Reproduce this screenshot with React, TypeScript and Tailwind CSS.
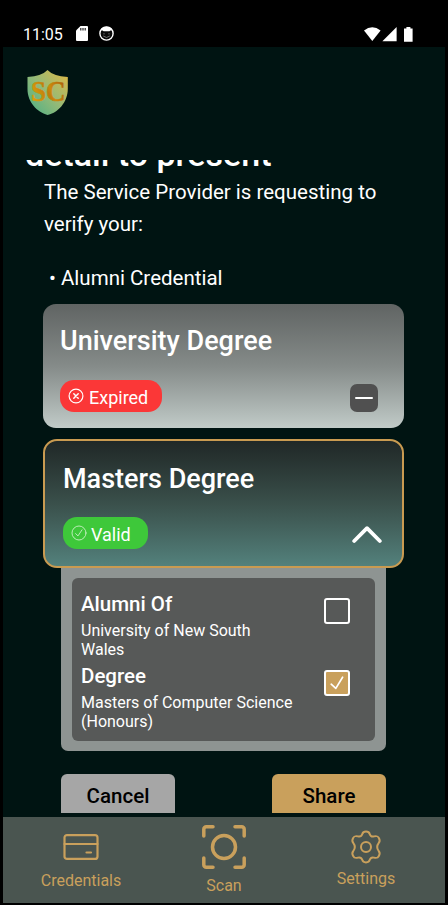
import type { ReactNode } from 'react';

function StatusBar() {
  return (
    <div className="flex h-[47px] items-end justify-between bg-black pr-[34px] pb-[5px] pl-[23px] text-white">
      <div className="flex items-center">
        <span className="w-[53px] pt-[2px] text-[16px] leading-[15px]">11:05</span>
        <svg className="h-[15px] w-[12px]" viewBox="0 0 12 15">
          <path d="M4.5 0H11a1 1 0 0 1 1 1v13a1 1 0 0 1-1 1H1a1 1 0 0 1-1-1V4.5Z" fill="#fff" />
          <path d="M4.8 2v2.4M7 2v2.4M9.2 2v2.4" stroke="#222" strokeWidth="1.2" />
        </svg>
        <svg className="ml-[11px] h-[15px] w-[15px]" viewBox="0 0 15 15">
          <circle cx="7.5" cy="7.5" r="6.6" fill="#0a0a0a" stroke="#fff" strokeWidth="1.4" />
          <path d="M1 6.2A6.6 6.6 0 0 1 14 6.2L12.4 4 10.4 5.2H4.6L2.6 4Z" fill="#fff" />
          <path d="M4.2 10q3.3 3 6.6 0" stroke="#888" strokeWidth=".8" fill="none" />
          <circle cx="5" cy="7.8" r=".6" fill="#999" />
          <circle cx="10" cy="7.8" r=".6" fill="#999" />
        </svg>
      </div>
      <svg className="h-[15px] w-[50px]" viewBox="0 0 50 15">
        <path d="M0 3.6Q8.3-3 16.6 3.6L8.3 14Z" fill="#fff" />
        <path d="M32.6 0V14.2H18.4Z" fill="#fff" />
        <path d="M42.4 0h4V1.4h2.2V14.8H40V1.4h2.4Z" fill="#fff" />
      </svg>
    </div>
  );
}

function Logo() {
  return (
    <svg className="mt-[22px] ml-6 h-[47px] w-[42px]" viewBox="0 0 42 47">
      <defs>
        <linearGradient id="shield" x1="0" y1="1" x2="0.9" y2="0.1">
          <stop offset="0.15" stopColor="#5cb283" />
          <stop offset="0.55" stopColor="#94ba77" />
          <stop offset="1" stopColor="#d4b94d" />
        </linearGradient>
        <linearGradient id="letters" x1="0" y1="0.6" x2="1" y2="0.2">
          <stop offset="0" stopColor="#d99f0c" />
          <stop offset="0.45" stopColor="#c07c0c" />
          <stop offset="0.55" stopColor="#cc8a0c" />
          <stop offset="1" stopColor="#a95c08" />
        </linearGradient>
      </defs>
      <path d="M20.5 1Q26 7 40.8 8V20C40.8 33 31 44 20.5 46 10 43 .5 33 .5 20V8Q15 7 20.5 1Z" fill="url(#shield)" />
      <text x="4" y="31.6" fontFamily="'Liberation Serif', serif" fontWeight="700" fontSize="28.5" textLength="34.5" lengthAdjust="spacingAndGlyphs" fill="url(#letters)" stroke="url(#letters)" strokeWidth=".5">SC</text>
    </svg>
  );
}

function ExpiredIcon() {
  return (
    <svg className="h-4 w-4" viewBox="0 0 16 16" fill="none" stroke="#fff" strokeLinecap="round">
      <circle cx="8" cy="8" r="6.9" strokeWidth="1.2" />
      <path d="m5.8 5.8 4.4 4.4m0-4.4-4.4 4.4" strokeWidth="1.5" />
    </svg>
  );
}

function ValidIcon() {
  return (
    <svg className="h-4 w-4" viewBox="0 0 16 16" fill="none" stroke="#d9f5d5" strokeWidth=".8" strokeLinecap="round" strokeLinejoin="round">
      <circle cx="8" cy="8" r="7" />
      <path d="m4.6 8.6 2.4 2.3 4-6" />
    </svg>
  );
}

function Checkbox({ checked }: { checked: boolean }) {
  return (
    <div className={checked ? 'h-[26px] w-[26px] rounded-[3px] border-2 border-white bg-[#c9a05c]' : 'h-[26px] w-[26px] rounded-[3px] border-2 border-white'}>
      {checked && (
        <svg className="h-[22px] w-[22px]" viewBox="0 0 22 22" fill="none" stroke="#fff" strokeWidth="1.7" strokeLinecap="round" strokeLinejoin="round">
          <path d="m5.2 12.2 4.6 4.2 6.8-11.2" />
        </svg>
      )}
    </div>
  );
}

function Claim({ name, value, checked }: { name: string; value: ReactNode; checked: boolean }) {
  return (
    <div className="flex h-[72px] justify-between">
      <div>
        <h3 className="text-[20.5px] leading-[26px] font-medium">{name}</h3>
        <p className="mt-[4px] text-[16px] leading-[19px]">{value}</p>
      </div>
      <div className="pt-[7px]">
        <Checkbox checked={checked} />
      </div>
    </div>
  );
}

function Tab({ label, icon, className }: { label: string; icon: ReactNode; className: string }) {
  return (
    <div className={`flex flex-col items-center ${className}`}>
      {icon}
      <span className="text-[16px] leading-5">{label}</span>
    </div>
  );
}

export default function App() {
  return (
    <div className="h-[905px] w-[448px] overflow-hidden bg-black font-['Roboto',sans-serif]">
      <StatusBar />
      <div className="mx-[3px] flex h-[856px] flex-col bg-[#001412] text-white">
        <div className="h-[113px] shrink-0">
          <Logo />
        </div>
        <main className="h-[653px] shrink-0 overflow-hidden">
          <h1 className="-mt-[26px] ml-[22px] text-[34px] leading-[40px] font-medium whitespace-nowrap">detail to present</h1>
          <div className="mt-[2px] ml-[41px] text-[20.5px] leading-8 whitespace-nowrap">
            <p>The Service Provider is requesting to<br />verify your:</p>
            <p className="mt-[22px] pl-[5px]">• Alumni Credential</p>
          </div>

          <section className="mt-[10px] ml-[40px] flex h-[124px] w-[361px] flex-col justify-between rounded-[13px] bg-linear-to-b from-[#606463] via-[#858b89] to-[#c1cbc8] pt-[20px] pr-[26px] pb-[16px] pl-[17px]">
            <h2 className="text-[27px] leading-[34px] font-medium">University Degree</h2>
            <div className="flex items-end justify-between">
              <div className="flex h-8 w-[102px] items-center gap-[5px] rounded-[14px] bg-[#fb3737] pl-[8px]">
                <ExpiredIcon />
                <span className="pt-[2px] text-[18px]">Expired</span>
              </div>
              <div className="flex h-[28px] w-[28px] items-center justify-center rounded-[7px] bg-[#505050]">
                <div className="h-[2px] w-[18px] rounded bg-white" />
              </div>
            </div>
          </section>

          <section className="mt-[11px] ml-[40px] flex h-[129px] w-[361px] flex-col justify-between rounded-[14px] border-2 border-[#c99b51] bg-linear-to-b from-[#202827] via-[#3a504b] to-[#53817c] pt-[21px] pr-[20px] pb-[17px] pl-[18px]">
            <h2 className="text-[27px] leading-[34px] font-medium">Masters Degree</h2>
            <div className="flex items-end justify-between">
              <div className="flex h-8 w-[85px] items-center gap-[4px] rounded-[14px] bg-[#3ec83a] pl-[8px]">
                <ValidIcon />
                <span className="pt-[2px] text-[18px]">Valid</span>
              </div>
              <svg className="mb-[5px] h-[19px] w-[30px]" viewBox="0 0 30 19" fill="none" stroke="#fff" strokeWidth="3.8" strokeLinecap="round" strokeLinejoin="round">
                <path d="M2.2 16 15 3.2 27.8 16" />
              </svg>
            </div>
          </section>

          <section className="ml-[58px] h-[183px] w-[325px] rounded-b-[7px] bg-[#8e9492] px-[11px] pt-[10px]">
            <div className="h-[163px] rounded-[6px] bg-[#575958] pt-[13px] pr-[25px] pl-[9px]">
              <Claim name="Alumni Of" value={<>University of New South<br />Wales</>} checked={false} />
              <Claim name="Degree" value={<>Masters of Computer Science<br />(Honours)</>} checked />
            </div>
          </section>

          <div className="mt-[23px] ml-[58px] flex w-[325px] justify-between text-[20.5px] font-medium text-black">
            <button className="h-[45px] w-[114px] rounded-[6px] bg-[#a6a6a6]">Cancel</button>
            <button className="h-[45px] w-[114px] rounded-[6px] bg-[#c9a05c]">Share</button>
          </div>
        </main>

        <nav className="mt-1 flex h-[86px] shrink-0 bg-[#4a5550] text-[#c9a05c]">
          <Tab
            label="Credentials"
            className="w-[156px] pt-[17px]"
            icon={
              <svg className="mb-[11px] h-[26px] w-[36px]" viewBox="0 0 36 26" fill="none" stroke="currentColor" strokeWidth="2.2" strokeLinecap="round">
                <rect x="1.5" y="1.1" width="33" height="23.8" rx="2.5" />
                <path d="M1.5 10h33M23.5 18.5h4.5" />
              </svg>
            }
          />
          <Tab
            label="Scan"
            className="w-[130px] pt-[8px]"
            icon={
              <svg className="mb-[7px] h-[44px] w-[44px]" viewBox="0 0 44 44" fill="none" stroke="currentColor" strokeWidth="3.5" strokeLinecap="round" strokeLinejoin="round">
                <path d="M1.8 11V4.3A2.5 2.5 0 0 1 4.3 1.8H11M33 1.8h6.7a2.5 2.5 0 0 1 2.5 2.5V11M42.2 33v6.7a2.5 2.5 0 0 1-2.5 2.5H33M11 42.2H4.3a2.5 2.5 0 0 1-2.5-2.5V33" />
                <circle cx="22" cy="22" r="11.5" />
              </svg>
            }
          />
          <Tab
            label="Settings"
            className="w-[154px] pt-[13px]"
            icon={
              <svg className="mb-[5px] h-[34px] w-[32px]" viewBox="0 0 32 34" fill="none" stroke="currentColor" strokeWidth="2" strokeLinejoin="round">
                <path d="M12.2 4.2C12.8 2.3 13.8 1.6 16 1.6S19.2 2.3 19.8 4.2C20.4 6 22 6.9 24 6.4 26.9 5.6 27.9 6 29 8.2S30.2 11.3 28.8 12.8C26.8 15.4 26.8 18.6 28.8 21.2 30.2 22.7 30.1 23.6 29 25.8S26.9 28.4 24 27.6C22 27.1 20.4 28 19.8 29.8 19.2 31.7 18.2 32.4 16 32.4S12.8 31.7 12.2 29.8C11.6 28 10 27.1 8 27.6 5.1 28.4 4.1 28 3 25.8S1.8 22.7 3.2 21.2C5.2 18.6 5.2 15.4 3.2 12.8 1.8 11.3 1.9 10.4 3 8.2S5.1 5.6 8 6.4C10 6.9 11.6 6 12.2 4.2Z" />
                <circle cx="16" cy="17" r="5" />
              </svg>
            }
          />
        </nav>
      </div>
    </div>
  );
}
